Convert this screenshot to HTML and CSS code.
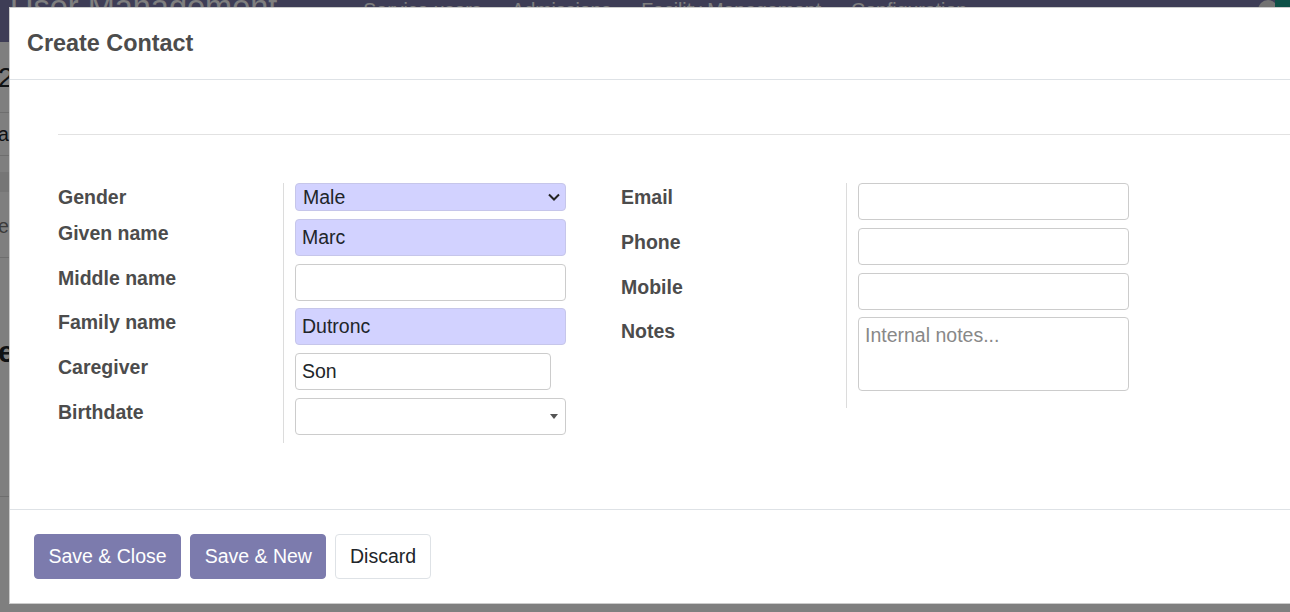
FILE: index.html
```html
<!DOCTYPE html>
<html>
<head>
<meta charset="utf-8">
<title>Create Contact</title>
<link rel="stylesheet" href="styles.css">
</head>
<body>
<div class="page">
  <header class="navbar">
    <span class="brand">User Management</span>
    <nav class="menu">
      <span>Service users</span>
      <span>Admissions</span>
      <span>Facility Management</span>
      <span>Configuration</span>
    </nav>
    <span class="nav-right"><span class="avatar"></span><span class="teal"></span></span>
  </header>
  <div class="bg-content">
    <div class="bc">2</div>
    <div class="row-b">ar</div>
    <div class="stripe"></div>
    <div class="row-c">e</div>
    <div class="big">e</div>
    <div class="line"></div>
  </div>
</div>

<div class="backdrop"></div>

<div class="modal">
  <div class="m-head">
    <h4 class="m-title">Create Contact</h4>
  </div>
  <div class="m-body">
    <div class="sheet-top"></div>
    <div class="groups">
      <div class="group">
        <label class="lbl">Gender</label>
        <div class="fld">
          <div class="wrap">
            <select class="inp sel req"><option>Male</option><option>Female</option></select>
            <svg class="chev" width="12" height="8" viewBox="0 0 12 8"><path d="M1 1.5 L6 6.5 L11 1.5" fill="none" stroke="#222" stroke-width="2"/></svg>
          </div>
        </div>
        <label class="lbl">Given name</label>
        <div class="fld"><input class="inp req" type="text" value="Marc"></div>
        <label class="lbl">Middle name</label>
        <div class="fld"><input class="inp" type="text" value=""></div>
        <label class="lbl">Family name</label>
        <div class="fld"><input class="inp req" type="text" value="Dutronc"></div>
        <label class="lbl">Caregiver</label>
        <div class="fld"><input class="inp w-short" type="text" value="Son"></div>
        <label class="lbl">Birthdate</label>
        <div class="fld">
          <div class="wrap">
            <input class="inp" type="text" value="">
            <span class="caret"></span>
          </div>
        </div>
      </div>
      <div class="group">
        <label class="lbl">Email</label>
        <div class="fld"><input class="inp" type="text" value=""></div>
        <label class="lbl">Phone</label>
        <div class="fld"><input class="inp" type="text" value=""></div>
        <label class="lbl">Mobile</label>
        <div class="fld"><input class="inp" type="text" value=""></div>
        <label class="lbl">Notes</label>
        <div class="fld fld-last"><textarea class="inp area" placeholder="Internal notes..."></textarea></div>
      </div>
    </div>
  </div>
  <div class="m-foot">
    <button class="btn btn-primary">Save &amp; Close</button>
    <button class="btn btn-primary">Save &amp; New</button>
    <button class="btn btn-secondary">Discard</button>
  </div>
</div>
</body>
</html>
```

FILE: styles.css
```css
* { box-sizing: border-box; }

html, body {
  margin: 0;
  height: 100%;
  overflow: hidden;
}

body {
  font-family: "Liberation Sans", Arial, sans-serif;
  background: #ffffff;
  color: #212529;
}

/* ---------- background page ---------- */
.navbar {
  height: 42px;
  background: #7c7bad;
  color: #ffffff;
  display: flex;
  align-items: flex-start;
  overflow: hidden;
  white-space: nowrap;
}

.brand {
  font-size: 32.5px;
  line-height: 32px;
  margin: -9px 0 0 10px;
}

.menu {
  display: flex;
  gap: 30px;
  margin: 0 0 0 86px;
  font-size: 19.5px;
  line-height: 20px;
}

.nav-right {
  margin-left: auto;
  display: flex;
  margin-right: -6px;
}

.avatar {
  width: 20px;
  height: 20px;
  border-radius: 50%;
  background: #e4e4e4;
  margin-right: -3px;
}

.teal {
  width: 21px;
  height: 30px;
  background: #1aa08f;
}

.bg-content {
  margin-left: -2px;
}

.bc {
  height: 71px;
  padding-top: 21px;
  font-size: 28px;
  line-height: 30px;
  border-bottom: 1px solid #dcdcdc;
}

.row-b {
  height: 43px;
  font-size: 19.5px;
  line-height: 42px;
  border-bottom: 1px solid #dcdcdc;
}

.stripe {
  height: 20px;
  margin-top: 16px;
  background: #ececec;
}

.row-c {
  height: 66px;
  padding-top: 24px;
  font-size: 19.5px;
  line-height: 20px;
  color: #777777;
  border-bottom: 1px solid #dcdcdc;
}

.big {
  margin-top: 79px;
  font-size: 30px;
  line-height: 30px;
  font-weight: 700;
}

.line {
  margin-top: 129px;
  border-top: 1px solid #dcdcdc;
}

/* ---------- backdrop + modal ---------- */
.backdrop {
  position: fixed;
  inset: 0;
  background: rgba(0, 0, 0, 0.5);
}

.modal {
  position: fixed;
  left: 9px;
  top: 7px;
  width: 1320px;
  background: #ffffff;
  border: 1px solid rgba(0, 0, 0, 0.2);
}

.m-head {
  height: 72px;
  display: flex;
  align-items: center;
  padding-left: 17px;
  border-bottom: 1px solid #dee2e6;
}

.m-title {
  margin: 0;
  font-size: 23.4px;
  line-height: 1.2;
  font-weight: 700;
  color: #4c4c4c;
}

.m-body {
  height: 429px;
  padding-left: 48px;
}

.sheet-top {
  height: 55px;
  border-bottom: 1px solid #e2e2e2;
}

.groups {
  display: flex;
  align-items: flex-start;
  gap: 55px;
  margin-top: 48px;
}

.group {
  display: grid;
  grid-template-columns: 225px 283px;
  align-items: start;
  align-content: start;
}

.lbl {
  font-size: 19.5px;
  line-height: 1.5;
  font-weight: 700;
  color: #4c4c4c;
}

.fld {
  align-self: stretch;
  border-left: 1px solid #dcdcdc;
  padding: 0 0 7.75px 11px;
}

.fld-last {
  padding-bottom: 17px;
}

.wrap {
  position: relative;
  width: 271px;
}

.inp {
  display: block;
  width: 271px;
  height: 37px;
  margin: 0;
  padding: 0 6px;
  font-family: "Liberation Sans", Arial, sans-serif;
  font-size: 19.5px;
  color: #212529;
  background: #ffffff;
  border: 1px solid #cccccc;
  border-radius: 4px;
  outline: none;
}

.req {
  background: #d2d2ff;
  border-color: #c6c6ea;
}

.sel {
  height: 28px;
  line-height: 26px;
  padding: 0 28px 0 7px;
  -webkit-appearance: none;
  appearance: none;
}

.chev {
  position: absolute;
  right: 6px;
  top: 10px;
}

.w-short {
  width: 256px;
}

.caret {
  position: absolute;
  right: 8px;
  top: 16px;
  width: 0;
  height: 0;
  border-left: 4.5px solid transparent;
  border-right: 4.5px solid transparent;
  border-top: 5px solid #555555;
}

.area {
  height: 74px;
  padding: 3px 6px;
  line-height: 1.5;
  resize: none;
}

.area::placeholder {
  color: #888888;
}

.m-foot {
  display: flex;
  gap: 9px;
  padding: 24px;
  border-top: 1px solid #dee2e6;
}

.btn {
  font-family: "Liberation Sans", Arial, sans-serif;
  font-size: 19.5px;
  line-height: 29px;
  padding: 7px 13.5px;
  border: 1px solid transparent;
  border-radius: 4px;
  cursor: pointer;
}

.btn-primary {
  background: #7c7bad;
  border-color: #7c7bad;
  color: #ffffff;
}

.btn-secondary {
  background: #ffffff;
  border-color: #dee2e6;
  color: #212529;
}
```
